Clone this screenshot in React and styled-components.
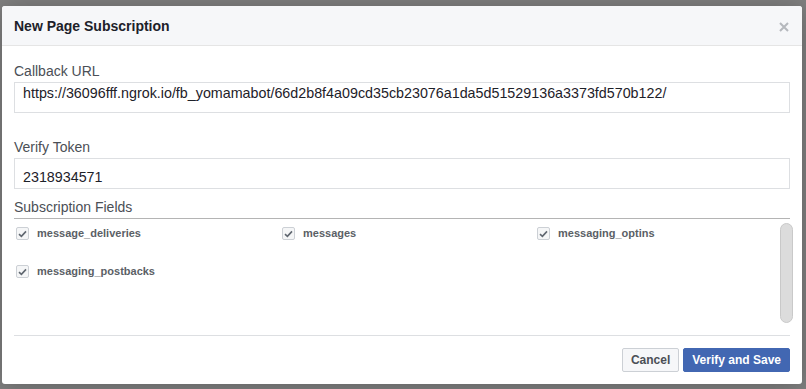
import React from "react";
import styled, { createGlobalStyle } from "styled-components";

const GlobalStyle = createGlobalStyle`
  html, body {
    margin: 0;
    padding: 0;
    background: #808080;
    font-family: "Liberation Sans", Arial, sans-serif;
  }
`;

const Backdrop = styled.div`
  width: 806px;
  height: 389px;
  box-sizing: border-box;
  padding: 6px 4px 5px 2px;
  background: #808080;
`;

const Modal = styled.div`
  width: 800px;
  height: 378px;
  background: #fff;
  border-radius: 3px;
  box-shadow: 0 2px 26px rgba(0, 0, 0, 0.25);
  display: flex;
  flex-direction: column;
  overflow: hidden;
`;

const Header = styled.div`
  height: 39px;
  flex: none;
  display: flex;
  align-items: center;
  justify-content: space-between;
  padding: 0 12px;
  background: #f6f7f9;
  border-bottom: 1px solid #e5e5e5;
`;

const Title = styled.h2`
  margin: 0;
  font-size: 14px;
  font-weight: bold;
  color: #1d2129;
  line-height: 18px;
`;

const Close = styled.button`
  border: none;
  background: none;
  padding: 0;
  width: 12px;
  height: 12px;
  display: flex;
  cursor: pointer;
  margin-top: 2px;
`;

const Body = styled.div`
  padding: 16px 12px 0 12px;
  display: flex;
  flex-direction: column;
  flex: 1;
`;

const Label = styled.div`
  font-size: 14px;
  line-height: 18px;
  color: #4b4f56;
  margin-bottom: 2px;
`;

const TextBox = styled.div`
  height: 31px;
  box-sizing: border-box;
  border: 1px solid #dddfe2;
  padding: ${(p) => p.$padTop}px 8px 0 8px;
  font-size: 14.3px;
  line-height: 18px;
  color: #1d2129;
  white-space: nowrap;
  overflow: hidden;
  margin-bottom: ${(p) => p.$gap}px;
`;

const Divider = styled.div`
  height: 1px;
  background: #b4b4b4;
  margin: 0 0 4px;
`;

const ScrollArea = styled.div`
  height: 100px;
  display: flex;
  margin-bottom: 12px;
`;

const FieldGrid = styled.div`
  flex: 1;
  display: grid;
  grid-template-columns: 266px 255px 1fr;
  grid-auto-rows: 13px;
  row-gap: 25px;
  padding: 4px 0 0 2px;
  align-content: start;
`;

const CheckItem = styled.label`
  display: flex;
  align-items: center;
  gap: 8px;
  font-size: 11px;
  font-weight: bold;
  color: #5b5f66;
  line-height: 13px;
`;

const Box = styled.span`
  width: 13px;
  height: 13px;
  box-sizing: border-box;
  border: 1px solid #ccd0d5;
  border-radius: 2px;
  background: #f5f6f7;
  display: flex;
  align-items: center;
  justify-content: center;
`;

const Scrollbar = styled.div`
  width: 13px;
  height: 100px;
  box-sizing: border-box;
  margin-right: -3px;
  border: 1px solid #c9c9c9;
  border-radius: 7px;
  background: #dcdcdc;
`;

const Footer = styled.div`
  border-top: 1px solid #dddfe2;
  padding: 12px 0;
  display: flex;
  justify-content: flex-end;
  gap: 4px;
`;

const Button = styled.button`
  height: 24px;
  box-sizing: border-box;
  padding: 0 8px;
  font-family: "Liberation Sans", Arial, sans-serif;
  font-size: 12px;
  font-weight: bold;
  border-radius: 2px;
  cursor: pointer;
  border: 1px solid ${(p) => (p.$primary ? "#4267b2" : "#ccd0d5")};
  background: ${(p) => (p.$primary ? "#4267b2" : "#f6f7f9")};
  color: ${(p) => (p.$primary ? "#fff" : "#4b4f56")};
`;

const fields = [
  "message_deliveries",
  "messages",
  "messaging_optins",
  "messaging_postbacks",
];

const Check = () => (
  <svg width="9" height="8" viewBox="0 0 9 8">
    <path d="M1 4.2 L3.4 6.4 L8 1.4" fill="none" stroke="#606770" strokeWidth="1.6" />
  </svg>
);

export default function App() {
  return (
    <>
      <GlobalStyle />
      <Backdrop>
        <Modal>
          <Header>
            <Title>New Page Subscription</Title>
            <Close aria-label="Close">
              <svg width="12" height="12" viewBox="0 0 12 12">
                <path d="M2 2 L10 10 M10 2 L2 10" stroke="#b5b8bd" strokeWidth="2" />
              </svg>
            </Close>
          </Header>
          <Body>
            <Label>Callback URL</Label>
            <TextBox $padTop={1} $gap={25}>
              https://36096fff.ngrok.io/fb_yomamabot/66d2b8f4a09cd35cb23076a1da5d51529136a3373fd570b122/
            </TextBox>
            <Label>Verify Token</Label>
            <TextBox $padTop={9} $gap={9}>2318934571</TextBox>
            <Label>Subscription Fields</Label>
            <Divider />
            <ScrollArea>
              <FieldGrid>
                {fields.map((f) => (
                  <CheckItem key={f}>
                    <Box>
                      <Check />
                    </Box>
                    {f}
                  </CheckItem>
                ))}
              </FieldGrid>
              <Scrollbar />
            </ScrollArea>
            <Footer>
              <Button>Cancel</Button>
              <Button $primary>Verify and Save</Button>
            </Footer>
          </Body>
        </Modal>
      </Backdrop>
    </>
  );
}
